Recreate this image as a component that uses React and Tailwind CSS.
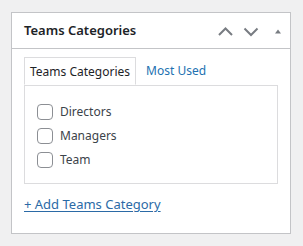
import React from 'react'

const items = ['Directors', 'Managers', 'Team']

export default function App() {
  return (
    <div className="min-h-[246px] bg-[#f0f0f1] pt-3 pl-[11px] font-['Noto_Sans',sans-serif] text-[#1d2327]">
      <div className="w-[280px] h-[222px] border border-[#c3c4c7] bg-white">
        <div className="flex h-[36px] items-center justify-between border-b border-[#c3c4c7] pl-3">
          <h2 className="text-[13px] font-semibold">Teams Categories</h2>
          <div className="flex items-center">
            <svg width="26" height="20" viewBox="0 0 26 20" className="text-[#787c82]">
              <path d="M7 14 L13.5 7.5 L20 14" fill="none" stroke="currentColor" strokeWidth="2" />
            </svg>
            <svg width="26" height="20" viewBox="0 0 26 20" className="text-[#787c82]">
              <path d="M6.5 7.5 L13 14 L19.5 7.5" fill="none" stroke="currentColor" strokeWidth="2" />
            </svg>
            <svg width="26" height="20" viewBox="0 0 26 20" className="text-[#787c82]">
              <path d="M11 12.5 L14 8.5 L17 12.5 Z" fill="currentColor" />
            </svg>
          </div>
        </div>
        <div className="px-3 pt-2">
          <div className="flex text-[12px]">
            <div className="h-[28px] -mb-px relative border border-b-white border-[#dcdcde] bg-white px-[5px] leading-[27px]">
              Teams Categories
            </div>
            <div className="h-[28px] px-[10px] leading-[27px] text-[#2271b1]">Most Used</div>
          </div>
          <div className="h-[99px] border border-[#dcdcde] pl-3 pt-[17px]">
            {items.map((t) => (
              <label key={t} className="flex h-[24px] items-start gap-[7px] text-[12px] text-[#3c434a]">
                <span className="mt-px h-[16px] w-[16px] rounded-[4px] border border-[#8c8f94] bg-white" />
                <span className="leading-[17px]">{t}</span>
              </label>
            ))}
          </div>
          <div className="mt-[11px] text-[13px]">
            <a href="#" className="text-[#2b6aa6] underline underline-offset-2">+ Add Teams Category</a>
          </div>
        </div>
      </div>
    </div>
  )
}
